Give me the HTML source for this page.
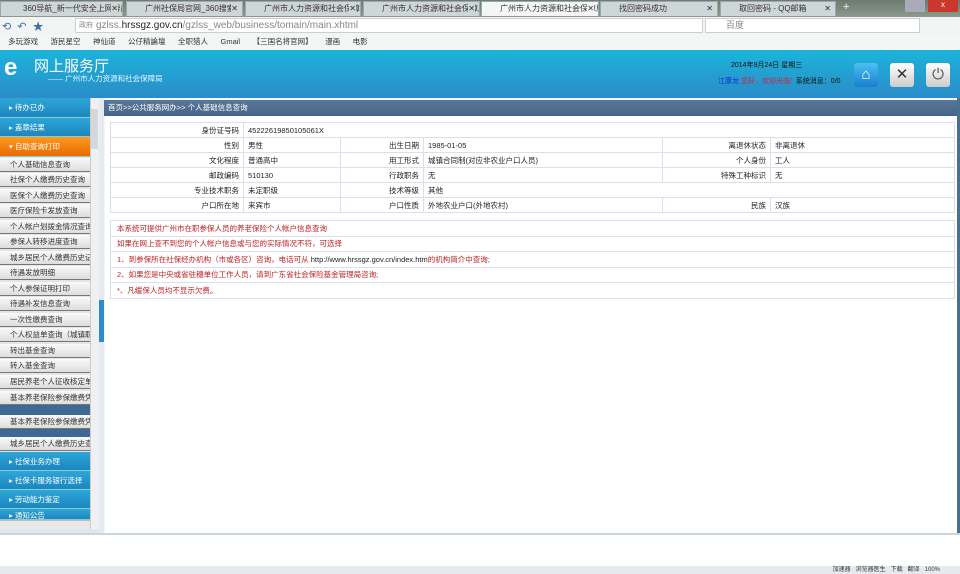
<!DOCTYPE html><html><head><meta charset="utf-8"><style>
*{margin:0;padding:0;box-sizing:border-box}
body{width:960px;height:574px;overflow:hidden;font-family:"Liberation Sans","Noto Sans CJK SC",sans-serif;font-size:8px;color:#222;background:#fff;position:relative}
.a{position:absolute}
.tab{position:absolute;top:1px;height:15px;background:#cfd6d8;border:1px solid #9aa;border-bottom:none;font-size:8px;line-height:14px;padding-left:18px;padding-right:14px;color:#333;white-space:nowrap;overflow:hidden}
.tab b{position:absolute;right:4px;top:0;font-weight:normal;background:inherit}
.sg{position:absolute;left:0;width:90px;height:14px;background:linear-gradient(#fafafa,#ddd);border-bottom:1px solid #777;font-size:7.5px;line-height:14px;padding-left:10px;color:#333;white-space:nowrap;overflow:hidden}
.sb{position:absolute;left:0;width:90px;background:linear-gradient(#2ea6d8,#1c86c0);border-bottom:1px solid #8cc;color:#fff;font-size:7.5px;padding-left:9px;white-space:nowrap}
table{border-collapse:collapse}
td{border:1px solid #dde;height:15px;font-size:7.5px;padding:0 4px}
.r{text-align:right}
.n td{color:#c02020;height:15.5px;padding-left:6px}
</style></head><body>
<div class="a" style="left:0;top:0;width:960px;height:17px;background:linear-gradient(#6d7a70,#8c9a8c)"></div>
<div class="tab" style="left:0;width:123px;padding-left:22px">360导航_新一代安全上网导航<b>✕</b></div>
<div class="tab" style="left:126px;width:117px">广州社保局官网_360搜索<b>✕</b></div>
<div class="tab" style="left:245px;width:116px">广州市人力资源和社会保障局<b>✕</b></div>
<div class="tab" style="left:363px;width:117px">广州市人力资源和社会保障局<b>✕</b></div>
<div class="tab" style="left:481px;width:118px;background:#f4f6f6">广州市人力资源和社会保障局<b>✕</b></div>
<div class="tab" style="left:600px;width:118px">找回密码成功<b>✕</b></div>
<div class="tab" style="left:720px;width:116px">取回密码 - QQ邮箱<b>✕</b></div>
<div class="a" style="left:843px;top:1px;color:#fff;font-size:11px">+</div>
<div class="a" style="left:905px;top:0;width:20px;height:12px;background:#aab"></div>
<div class="a" style="left:928px;top:0;width:30px;height:12px;background:#c8382e;color:#fff;font-size:8px;text-align:center">x</div>
<div class="a" style="left:0;top:17px;width:960px;height:17px;background:#f2f4f4"></div>
<div class="a" style="left:2px;top:18px;font-size:11px;color:#4070b0">⟲ &nbsp;↶ &nbsp;★</div>
<div class="a" style="left:75px;top:18px;width:628px;height:15px;background:#fff;border:1px solid #ccd;font-size:10px;line-height:13px;padding-left:20px;color:#888"><span style="position:absolute;left:3px;font-size:7px">政府</span>gzlss.<span style="color:#222">hrssgz.gov.cn</span>/gzlss_web/business/tomain/main.xhtml</div>
<div class="a" style="left:705px;top:18px;width:215px;height:15px;background:#fff;border:1px solid #ccd;font-size:9px;line-height:13px;padding-left:20px;color:#888">百度</div>
<div class="a" style="left:0;top:34px;width:960px;height:16px;background:#f4f6f6;font-size:7.5px;line-height:16px;color:#333;white-space:nowrap;padding-left:8px">多玩游戏 &nbsp;&nbsp;&nbsp;&nbsp; 游民星空 &nbsp;&nbsp;&nbsp;&nbsp; 神仙道 &nbsp;&nbsp;&nbsp;&nbsp; 公仔精論壇 &nbsp;&nbsp;&nbsp;&nbsp; 全职猎人 &nbsp;&nbsp;&nbsp;&nbsp; Gmail &nbsp;&nbsp;&nbsp;&nbsp; 【三国名将官网】 &nbsp;&nbsp;&nbsp;&nbsp; 漫画 &nbsp;&nbsp;&nbsp;&nbsp; 电影</div>
<div class="a" style="left:0;top:50px;width:960px;height:48px;background:linear-gradient(#1cb4da,#2a8cc8)"></div>
<div class="a" style="left:4px;top:54px;font-size:24px;color:#fff;font-weight:bold">e</div>
<div class="a" style="left:34px;top:55px;font-size:15px;color:#fff">网上服务厅</div>
<div class="a" style="left:48px;top:73px;font-size:7.5px;color:#e8f6ff">—— 广州市人力资源和社会保障局</div>
<div class="a" style="left:731px;top:60px;font-size:7px;color:#111">2014年9月24日 星期三</div>
<div class="a" style="left:718px;top:76px;font-size:7px;color:#111;white-space:nowrap"><span style="color:#1030d0">江康龙</span> <span style="color:#d02040">您好，欢迎光临!</span> &nbsp;系统消息：0/0</div>
<div class="a" style="left:854px;top:63px;width:24px;height:24px;border-radius:3px;background:linear-gradient(#4ac0f0,#1a7ed0);color:#fff;font-size:15px;text-align:center;line-height:24px">⌂</div>
<div class="a" style="left:890px;top:63px;width:24px;height:24px;border-radius:3px;background:linear-gradient(#fff,#ccc);color:#333;font-size:15px;text-align:center;line-height:24px">✕</div>
<div class="a" style="left:926px;top:63px;width:24px;height:24px;border-radius:3px;background:linear-gradient(#fff,#ccc);color:#555;font-size:15px;text-align:center;line-height:24px">⏻</div>
<div class="a" style="left:0;top:98px;width:104px;height:436px;background:#dfe7ee"></div>
<div class="sb" style="top:98px;height:20px;line-height:20px">▸ 待办已办</div>
<div class="sb" style="top:118px;height:19px;line-height:19px">▸ 盖章结果</div>
<div class="sb" style="top:137px;height:20px;line-height:20px;background:linear-gradient(#ff9a20,#e86a00)">▾ 自助查询打印</div>
<div class="sg" style="top:158px">个人基础信息查询</div>
<div class="sg" style="top:173px">社保个人缴费历史查询</div>
<div class="sg" style="top:189px">医保个人缴费历史查询</div>
<div class="sg" style="top:204px">医疗保险卡发放查询</div>
<div class="sg" style="top:220px">个人帐户划拨金情况查询</div>
<div class="sg" style="top:235px">参保人转移进度查询</div>
<div class="sg" style="top:251px">城乡居民个人缴费历史记录</div>
<div class="sg" style="top:266px">待遇发放明细</div>
<div class="sg" style="top:282px">个人参保证明打印</div>
<div class="sg" style="top:297px">待遇补发信息查询</div>
<div class="sg" style="top:313px">一次性缴费查询</div>
<div class="sg" style="top:328px">个人权益单查询（城镇职工</div>
<div class="sg" style="top:344px">转出基金查询</div>
<div class="sg" style="top:359px">转入基金查询</div>
<div class="sg" style="top:375px">居民养老个人征收核定单</div>
<div class="sg" style="top:391px">基本养老保险参保缴费凭证</div>
<div class="a" style="left:0;top:405px;width:90px;height:10px;background:#3d6a94"></div>
<div class="sg" style="top:415px">基本养老保险参保缴费凭证</div>
<div class="a" style="left:0;top:429px;width:90px;height:8px;background:#3d6a94"></div>
<div class="sg" style="top:437px">城乡居民个人缴费历史查询</div>
<div class="sb" style="top:452px;height:19px;line-height:19px">▸ 社保业务办理</div>
<div class="sb" style="top:471px;height:19px;line-height:19px">▸ 社保卡服务银行选择</div>
<div class="sb" style="top:490px;height:19px;line-height:19px">▸ 劳动能力鉴定</div>
<div class="sb" style="top:509px;height:11px;line-height:14px;overflow:hidden">▸ 通知公告</div>
<div class="a" style="left:0;top:520px;width:90px;height:9px;background:#e8e8e8;border-top:1px solid #bbb"></div>
<div class="a" style="left:90px;top:98px;width:9px;height:431px;background:#eef0f2;border-left:1px solid #ccc"></div>
<div class="a" style="left:91px;top:109px;width:7px;height:40px;background:#d4d8dc"></div>
<div class="a" style="left:99px;top:98px;width:5px;height:436px;background:#e4eaf0"></div>
<div class="a" style="left:99px;top:300px;width:5px;height:42px;background:#2a8cc8"></div>
<div class="a" style="left:104px;top:98px;width:856px;height:436px;background:#f2f6f8;border-right:3px solid #4a7090"></div>
<div class="a" style="left:104px;top:100px;width:853px;height:16px;background:linear-gradient(#5a7898,#44658a);color:#fff;font-size:7.5px;line-height:16px;padding-left:4px">首页&gt;&gt;公共服务网办&gt;&gt; 个人基础信息查询</div>
<div class="a" style="left:105px;top:116px;width:852px;height:418px;background:#fff"></div>
<table class="a" style="left:110px;top:122px;width:845px">
<tr><td class="r" style="width:133px">身份证号码</td><td colspan="5">45222619850105061X</td></tr>
<tr><td class="r">性别</td><td style="width:97px">男性</td><td class="r" style="width:83px">出生日期</td><td style="width:239px">1985-01-05</td><td class="r" style="width:108px">离退休状态</td><td>非离退休</td></tr>
<tr><td class="r">文化程度</td><td>普通高中</td><td class="r">用工形式</td><td>城镇合同制(对应非农业户口人员)</td><td class="r">个人身份</td><td>工人</td></tr>
<tr><td class="r">邮政编码</td><td>510130</td><td class="r">行政职务</td><td>无</td><td class="r">特殊工种标识</td><td>无</td></tr>
<tr><td class="r">专业技术职务</td><td>未定职级</td><td class="r">技术等级</td><td colspan="3">其他</td></tr>
<tr><td class="r">户口所在地</td><td>来宾市</td><td class="r">户口性质</td><td>外地农业户口(外地农村)</td><td class="r">民族</td><td>汉族</td></tr>
</table>
<table class="a n" style="left:110px;top:220px;width:845px">
<tr><td>本系统可提供广州市在职参保人员的养老保险个人帐户信息查询</td></tr>
<tr><td>如果在网上查不到您的个人帐户信息或与您的实际情况不符，可选择</td></tr>
<tr><td>1、到参保所在社保经办机构（市或各区）咨询，电话可从 <span style="color:#222">http://www.hrssgz.gov.cn/index.htm</span>的机构简介中查询;</td></tr>
<tr><td>2、如果您是中央或省驻穗单位工作人员，请到广东省社会保险基金管理局咨询;</td></tr>
<tr><td>*、凡缓保人员均不显示欠费。</td></tr>
</table>
<div class="a" style="left:0;top:533px;width:960px;height:2px;background:#c8d4de"></div>
<div class="a" style="left:0;top:566px;width:960px;height:8px;background:#e6eaee;font-size:6px;color:#333;text-align:right;padding-right:20px;line-height:8px">加速器 &nbsp; 浏览器医生 &nbsp; 下载 &nbsp; 翻译 &nbsp; 100%</div>
</body></html>
